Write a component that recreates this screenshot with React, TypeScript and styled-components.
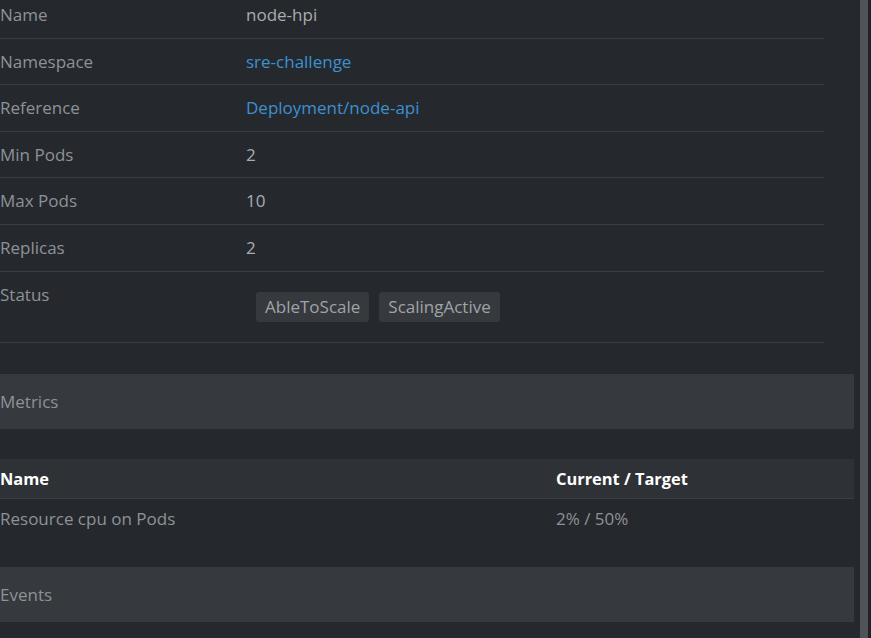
import React from "react";
import styled, { createGlobalStyle } from "styled-components";

const GlobalStyle = createGlobalStyle`
  html, body {
    margin: 0;
    padding: 0;
    background: #25292e;
    overflow: hidden;
  }
  body {
    font-family: "Open Sans", "Noto Sans", sans-serif;
    font-size: 17px;
    color: #8e9297;
  }
`;

const Page = styled.div`
  display: flex;
  height: 638px;
  overflow: hidden;
`;

// scrolled a few pixels down, so the first row is cut at the top
const Drawer = styled.div`
  flex: 1;
  display: flex;
  flex-direction: column;
  padding-right: 6px;
  margin-top: -8px;
`;

const ScrollTrack = styled.div`
  width: 8px;
  background: #505357;
`;

const Edge = styled.div`
  width: 3px;
  background: #1f2226;
`;

const Details = styled.div`
  margin-right: 30px;
`;

const Row = styled.div`
  display: flex;
  padding: 12px 0;
  line-height: 21.6px;
  border-bottom: 1px solid #3a3d42;
`;

const Label = styled.div`
  width: 246px;
  flex-shrink: 0;
  color: #8e9297;
`;

const Value = styled.div<{ $link?: boolean }>`
  flex: 1;
  display: flex;
  flex-wrap: wrap;
  color: ${(p) => (p.$link ? "#3d90ce" : "#a9acb0")};
`;

const Badge = styled.span`
  margin: 8px 0 8px 10px;
  padding: 0 9px;
  height: 30px;
  line-height: 30px;
  font-size: 17px;
  border-radius: 3px;
  background: #36393e;
  color: #a0a4a8;
`;

const SectionTitle = styled.div<{ $top: number }>`
  margin-top: ${(p) => p.$top}px;
  height: 55px;
  display: flex;
  align-items: center;
  background: #36393e;
  color: #8e9297;
`;

const Table = styled.div`
  margin-top: 30px;
`;

const TableHead = styled.div`
  display: flex;
  height: 39px;
  align-items: center;
  background: #2e3136;
  border-bottom: 1px solid #3a3d42;
  color: #ffffff;
  font-size: 16.4px;
  font-weight: 700;
`;

const TableRow = styled.div`
  display: flex;
  height: 39px;
  align-items: center;
  color: #8e9297;
`;

const Cell = styled.div<{ $w?: number }>`
  ${(p) => (p.$w ? `width: ${p.$w}px; flex-shrink: 0;` : "flex: 1;")}
`;

const details: { label: string; value: string; link?: boolean }[] = [
  { label: "Name", value: "node-hpi" },
  { label: "Namespace", value: "sre-challenge", link: true },
  { label: "Reference", value: "Deployment/node-api", link: true },
  { label: "Min Pods", value: "2" },
  { label: "Max Pods", value: "10" },
  { label: "Replicas", value: "2" },
];

export default function App() {
  return (
    <>
      <GlobalStyle />
      <Page>
        <Drawer>
          <Details>
            {details.map((d) => (
              <Row key={d.label}>
                <Label>{d.label}</Label>
                <Value $link={d.link}>{d.value}</Value>
              </Row>
            ))}
            <Row>
              <Label>Status</Label>
              <Value>
                <Badge>AbleToScale</Badge>
                <Badge>ScalingActive</Badge>
              </Value>
            </Row>
          </Details>

          <SectionTitle $top={31}>Metrics</SectionTitle>
          <Table>
            <TableHead>
              <Cell $w={556}>Name</Cell>
              <Cell>Current / Target</Cell>
            </TableHead>
            <TableRow>
              <Cell $w={556}>Resource cpu on Pods</Cell>
              <Cell>2% / 50%</Cell>
            </TableRow>
          </Table>

          <SectionTitle $top={29}>Events</SectionTitle>
        </Drawer>
        <ScrollTrack />
        <Edge />
      </Page>
    </>
  );
}
